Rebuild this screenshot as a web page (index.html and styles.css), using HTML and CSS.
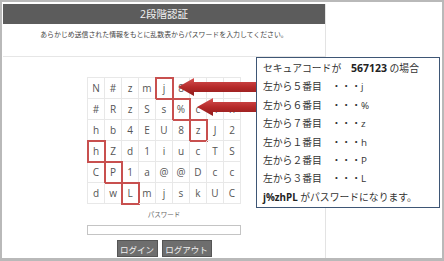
FILE: index.html
```html
<!doctype html>
<html lang="ja">
  <head>
    <meta charset="UTF-8" />
    <title>2段階認証</title>
    <link rel="stylesheet" href="styles.css">
  </head>
  <body>
    <div class="frame">
      <div class="panel">
        <div class="panel-head">2段階認証</div>
        <p class="lead">あらかじめ送信された情報をもとに乱数表からパスワードを入力してください。</p>

        <div class="matrix">
          <span>N</span><span>#</span><span>z</span><span>m</span><span class="hit">j</span><span>8</span><span>e</span><span>f</span><span>x</span>
          <span>#</span><span>R</span><span>z</span><span>S</span><span>s</span><span class="hit">%</span><span>c</span><span>4</span><span>n</span>
          <span>h</span><span>b</span><span>4</span><span>E</span><span>U</span><span>8</span><span class="hit">z</span><span>J</span><span>2</span>
          <span class="hit">h</span><span>Z</span><span>d</span><span>1</span><span>i</span><span>u</span><span>c</span><span>T</span><span>S</span>
          <span>C</span><span class="hit">P</span><span>1</span><span>a</span><span>@</span><span>@</span><span>D</span><span>c</span><span>c</span>
          <span>d</span><span>w</span><span class="hit">L</span><span>m</span><span>j</span><span>s</span><span>k</span><span>U</span><span>C</span>
        </div>

        <div class="login">
          <label class="login-label" for="pw">パスワード</label>
          <input class="login-input" id="pw" type="text" />
          <div class="login-buttons">
            <button class="btn btn-login">ログイン</button>
            <button class="btn btn-logout">ログアウト</button>
          </div>
        </div>
      </div>

      <!-- annotation arrows -->
      <svg class="arrows" width="444" height="261" viewBox="0 0 444 261">
        <defs>
          <linearGradient id="red" x1="0" y1="0" x2="0" y2="1">
            <stop offset="0" stop-color="#d65252" />
            <stop offset="0.5" stop-color="#b62a2a" />
            <stop offset="1" stop-color="#8e1c1c" />
          </linearGradient>
        </defs>
        <polygon points="178,87 194,78 194,82 258,82 258,92 194,92 194,96" fill="url(#red)" />
        <polygon points="197,107 213,98 213,102 258,102 258,112 213,112 213,116" fill="url(#red)" />
      </svg>

      <div class="note">
        <p>セキュアコードが　<b class="code">567123</b> の場合</p>
        <p>左から５番目　・・・j</p>
        <p>左から６番目　・・・%</p>
        <p>左から７番目　・・・z</p>
        <p>左から１番目　・・・h</p>
        <p>左から２番目　・・・P</p>
        <p>左から３番目　・・・L</p>
        <p><b>j%zhPL</b> がパスワードになります。</p>
      </div>
    </div>
  </body>
</html>
```

FILE: styles.css
```css
body {
  margin: 0;
  font-family: 'Open Sans', 'Noto Sans CJK JP', sans-serif;
  color: #333;
  background-color: white;
}
.frame {
  position: relative;
  box-sizing: border-box;
  width: 444px;
  height: 261px;
  border: 2px solid #b9b9b9;
  border-bottom-width: 3px;
  padding: 2px 0 0 1px;
}
.panel {
  box-sizing: border-box;
  width: 323px;
  height: 100%;
  border-right: 1px solid #e3e3e3;
}
.panel-head {
  height: 20px;
  line-height: 20px;
  background-color: #5c5c5c;
  color: #f2f2f2;
  font-size: 10.5px;
  text-align: center;
}
.lead {
  box-sizing: border-box;
  height: 33px;
  margin: 0;
  padding-top: 7px;
  font-size: 6.9px;
  line-height: 8px;
  text-align: center;
  color: #444;
  border-bottom: 1px solid #e6e6e6;
  white-space: nowrap;
}
.matrix {
  display: grid;
  grid-template-columns: repeat(9, 17px);
  grid-auto-rows: 21px;
  width: max-content;
  margin: 20px auto 0;
  border-top: 1px solid #e8e8e8;
  border-left: 1px solid #e8e8e8;
}
.matrix span {
  display: flex;
  align-items: center;
  justify-content: center;
  border-right: 1px solid #e8e8e8;
  border-bottom: 1px solid #e8e8e8;
  font-size: 10px;
  color: #555;
}
.matrix .hit {
  outline: 2px solid #c8504f;
  outline-offset: -1px;
}
.login {
  display: flex;
  flex-direction: column;
  align-items: center;
  margin-top: 7px;
}
.login-label {
  font-size: 6.5px;
  line-height: 8px;
  color: #666;
}
.login-input {
  box-sizing: border-box;
  width: 154px;
  height: 10px;
  margin: 6px 0 0;
  padding: 0;
  border: 1px solid #c4c4c4;
}
.login-buttons {
  display: flex;
  gap: 4px;
  margin-top: 5px;
}
.btn {
  box-sizing: border-box;
  height: 17px;
  padding: 0;
  border: 1px solid #555;
  background-color: #6e6e6e;
  color: #f0f0f0;
  font-family: 'Noto Sans CJK JP', sans-serif;
  font-size: 8.5px;
  line-height: 14px;
}
.btn-login {
  width: 41px;
}
.btn-logout {
  width: 50px;
}
.arrows {
  position: absolute;
  left: -2px;
  top: -2px;
}
.note {
  position: absolute;
  left: 254px;
  top: 55px;
  box-sizing: border-box;
  width: 184px;
  height: 151px;
  padding: 1px 0 0 6px;
  border: 1.5px solid #3e5675;
  background-color: white;
}
.note p {
  margin: 0;
  font-size: 9.8px;
  line-height: 18.4px;
  color: #333;
  white-space: nowrap;
}
.note b {
  color: #222;
}
.note .code {
  font-size: 10.5px;
}
```
